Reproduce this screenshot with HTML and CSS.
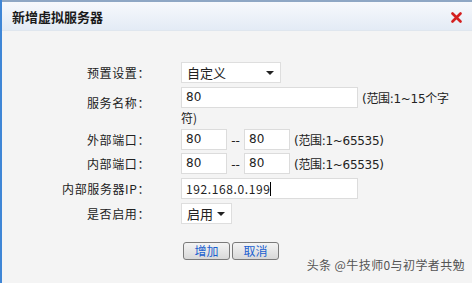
FILE: index.html
```html
<!DOCTYPE html>
<html>
<head>
<meta charset="utf-8">
<link rel="stylesheet" href="styles.css">
</head>
<body>
<div class="dialog">
  <div class="titlebar">
    <span class="title">新增虚拟服务器</span>
    <svg class="close" width="11" height="11" viewBox="0 0 11 11"><path d="M1.5 1.5 L9.5 9.5 M9.5 1.5 L1.5 9.5" stroke="#d42020" stroke-width="2.6" stroke-linecap="round"/></svg>
  </div>
  <div class="body">
    <div class="form">
      <div class="row r1">
        <div class="label">预置设置：</div>
        <div class="field"><div class="select s1"><span>自定义</span><span class="arrow"></span></div></div>
      </div>
      <div class="row r2">
        <div class="label">服务名称：</div>
        <div class="field wrap"><div class="input wide">80</div><span class="hint">(范围:1~15个字</span><div class="hint2">符)</div></div>
      </div>
      <div class="row r3">
        <div class="label">外部端口：</div>
        <div class="field"><div class="input short">80</div><span class="dash">--</span><div class="input short">80</div><span class="hint">(范围:1~65535)</span></div>
      </div>
      <div class="row r4">
        <div class="label">内部端口：</div>
        <div class="field"><div class="input short">80</div><span class="dash">--</span><div class="input short">80</div><span class="hint">(范围:1~65535)</span></div>
      </div>
      <div class="row r5">
        <div class="label">内部服务器IP：</div>
        <div class="field"><div class="input wide ip">192.168.0.199<span class="caret"></span></div></div>
      </div>
      <div class="row r6">
        <div class="label">是否启用：</div>
        <div class="field"><div class="select s2"><span>启用</span><span class="arrow"></span></div></div>
      </div>
    </div>
    <div class="buttons">
      <button class="btn">增加</button>
      <button class="btn">取消</button>
    </div>
    <div class="watermark">头条 @牛技师0与初学者共勉</div>
  </div>
</div>
</body>
</html>
```
FILE: styles.css
```css
* { box-sizing: border-box; }
html, body { margin: 0; padding: 0; }
body {
  width: 472px; height: 283px; overflow: hidden;
  font-family: "Noto Sans CJK SC", "DejaVu Sans", sans-serif;
  font-size: 12px; color: #222;
  background: #f4f4f4;
}
.dialog {
  width: 472px; height: 283px;
  border-left: 2px solid #3f86d6;
  display: flex; flex-direction: column;
  background: #f4f4f4;
}
.titlebar {
  height: 31px; flex: none;
  border-top: 2px solid #8fa7c4;
  border-bottom: 1px solid #dfe6ee;
  background: linear-gradient(#f7f9fc, #e3ebf5);
  display: flex; align-items: center; justify-content: space-between;
  padding: 0 10px 0 10px;
}
.title { font-weight: bold; font-size: 13px; color: #1a1a1a; }
.close { display: block; margin-top: 2px; }
.body { flex: 1; position: relative; padding-top: 31px; }
.form { display: flex; flex-direction: column; }
.row { display: flex; align-items: flex-start; }
.label { width: 148px; flex: none; text-align: right; line-height: 21px; color: #222; letter-spacing: 0.6px; }
.field { margin-left: 31px; display: flex; align-items: center; flex-wrap: wrap; width: 290px; }
.r1 { height: 25px; }
.r2 { height: 42px; }
.r3 { height: 24px; }
.r4 { height: 25px; }
.r5 { height: 25px; }
.r6 { height: 25px; }
.r2 .label { line-height: 32px; }
.input {
  height: 21px; background: #fff;
  border: 1px solid #dcdcdc;
  padding: 0 4px; line-height: 19px;
  font-family: "DejaVu Sans", sans-serif; font-size: 12px; color: #222;
}
.wide { width: 177px; }
.short { width: 46px; }
.ip { font-family: "Noto Sans CJK SC", sans-serif; letter-spacing: 0.6px; display: flex; align-items: center; }
.caret { display: inline-block; width: 1px; height: 14px; background: #000; }
.dash { width: 17px; text-align: center; font-family: "DejaVu Sans", sans-serif; padding-top: 3px; }
.hint { margin-left: 4px; font-family: "DejaVu Sans", "Noto Sans CJK SC", sans-serif; font-size: 12px; letter-spacing: -0.3px; }
.hint2 { width: 100%; line-height: 17px; margin-top: 1px; }
.select {
  height: 21px; background: #fff; border: 1px solid #dedede;
  display: flex; align-items: center; justify-content: space-between;
  padding: 0 6px 0 5px; font-size: 13px;
}
.s1 { width: 100px; }
.s2 { width: 51px; }
.arrow { width: 0; height: 0; border-left: 4px solid transparent; border-right: 4px solid transparent; border-top: 4px solid #222; }
.buttons { display: flex; gap: 2px; margin-left: 181px; margin-top: 14px; }
.btn {
  width: 47px; height: 18px; padding: 0;
  border: 1px solid #7a7a7a; border-radius: 3px;
  background: linear-gradient(#f4f4f4, #d8d8d8);
  color: #1a5fd0; font-family: "Noto Sans CJK SC", sans-serif; font-size: 12px; line-height: 16px;
}
.watermark {
  position: absolute; right: 7px; bottom: 10px;
  font-size: 12px; color: #555; letter-spacing: 0.4px;
}
```
